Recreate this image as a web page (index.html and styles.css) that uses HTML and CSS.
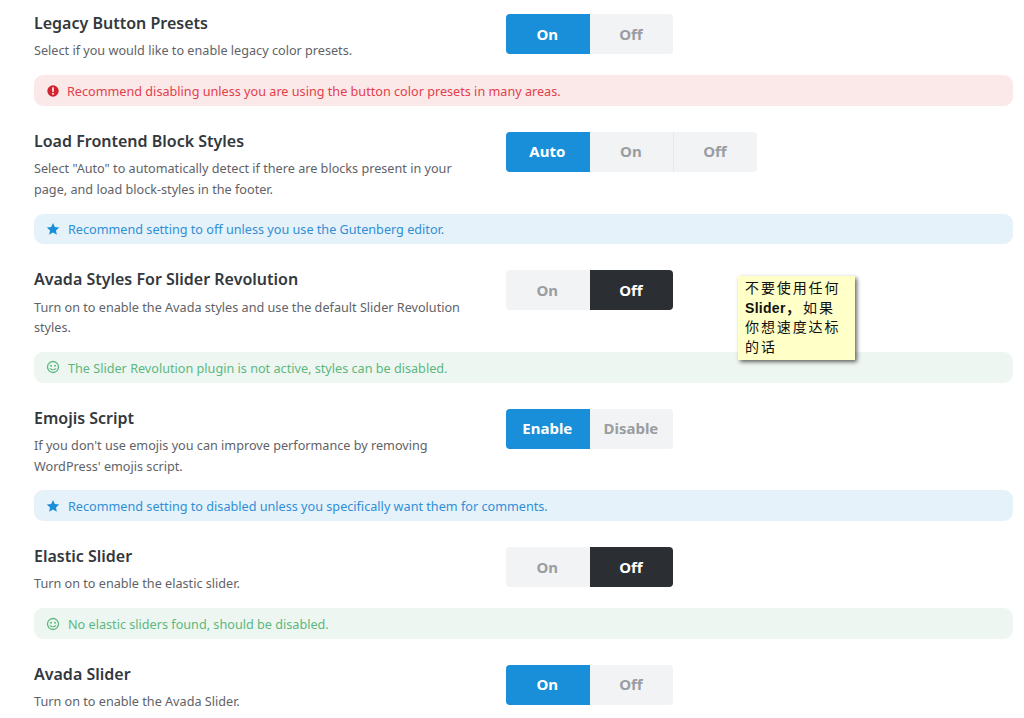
FILE: index.html
```html
<!DOCTYPE html>
<html lang="en">
<head>
<meta charset="utf-8">
<title>Performance options</title>
<link rel="stylesheet" href="styles.css">
</head>
<body>
<main class="options">
  <section class="option">
    <div class="row">
      <div class="info"><h3>Legacy Button Presets</h3><p>Select if you would like to enable legacy color presets.</p></div>
      <div class="toggle"><span class="seg active">On</span><span class="seg">Off</span></div>
    </div>
    <div class="notice danger">
      <svg class="icon" viewBox="0 0 16 16"><circle cx="8" cy="8" r="6.5" fill="currentColor"/><rect x="7" y="3.8" width="2" height="5.2" rx=".6" fill="#fbe9e9"/><circle cx="8" cy="11.1" r="1.15" fill="#fbe9e9"/></svg>
      <span>Recommend disabling unless you are using the button color presets in many areas.</span>
    </div>
  </section>
  <section class="option">
    <div class="row">
      <div class="info"><h3>Load Frontend Block Styles</h3><p>Select "Auto" to automatically detect if there are blocks present in your page, and load block-styles in the footer.</p></div>
      <div class="toggle"><span class="seg active">Auto</span><span class="seg">On</span><span class="seg">Off</span></div>
    </div>
    <div class="notice info-note">
      <svg class="icon" viewBox="0 0 16 16"><path fill="currentColor" d="M8 1l2.1 4.6 5 .6-3.7 3.4 1 4.9L8 12.1l-4.4 2.4 1-4.9L.9 6.200l5-.6z"/></svg>
      <span>Recommend setting to off unless you use the Gutenberg editor.</span>
    </div>
  </section>
  <section class="option">
    <div class="row">
      <div class="info"><h3>Avada Styles For Slider Revolution</h3><p>Turn on to enable the Avada styles and use the default Slider Revolution styles.</p></div>
      <div class="toggle"><span class="seg">On</span><span class="seg dark">Off</span></div>
    </div>
    <div class="notice success">
      <svg class="icon" viewBox="0 0 16 16"><circle cx="8" cy="8" r="6.300" fill="none" stroke="currentColor" stroke-width="1.500"/><circle cx="5.700" cy="6.500" r="1.100" fill="currentColor"/><circle cx="10.300" cy="6.500" r="1.100" fill="currentColor"/><path d="M4.800 9.700c1.600 2 4.800 2 6.400 0" fill="none" stroke="currentColor" stroke-width="1.300" stroke-linecap="round"/></svg>
      <span>The Slider Revolution plugin is not active, styles can be disabled.</span>
    </div>
  </section>
  <section class="option">
    <div class="row">
      <div class="info"><h3>Emojis Script</h3><p>If you don't use emojis you can improve performance by removing WordPress' emojis script.</p></div>
      <div class="toggle"><span class="seg active">Enable</span><span class="seg">Disable</span></div>
    </div>
    <div class="notice info-note">
      <svg class="icon" viewBox="0 0 16 16"><path fill="currentColor" d="M8 1l2.1 4.6 5 .6-3.7 3.4 1 4.9L8 12.1l-4.4 2.4 1-4.9L.9 6.200l5-.6z"/></svg>
      <span>Recommend setting to disabled unless you specifically want them for comments.</span>
    </div>
  </section>
  <section class="option">
    <div class="row">
      <div class="info"><h3>Elastic Slider</h3><p>Turn on to enable the elastic slider.</p></div>
      <div class="toggle"><span class="seg">On</span><span class="seg dark">Off</span></div>
    </div>
    <div class="notice success">
      <svg class="icon" viewBox="0 0 16 16"><circle cx="8" cy="8" r="6.300" fill="none" stroke="currentColor" stroke-width="1.500"/><circle cx="5.700" cy="6.500" r="1.100" fill="currentColor"/><circle cx="10.300" cy="6.500" r="1.100" fill="currentColor"/><path d="M4.800 9.700c1.600 2 4.800 2 6.400 0" fill="none" stroke="currentColor" stroke-width="1.300" stroke-linecap="round"/></svg>
      <span>No elastic sliders found, should be disabled.</span>
    </div>
  </section>
  <section class="option">
    <div class="row">
      <div class="info"><h3>Avada Slider</h3><p>Turn on to enable the Avada Slider.</p></div>
      <div class="toggle"><span class="seg active">On</span><span class="seg">Off</span></div>
    </div>
  </section>
</main>
<aside class="sticky">不要使用任何<br><b>Slider，</b>如果<br>你想速度达标<br>的话</aside>
</body>
</html>
```
FILE: styles.css
```css
* { box-sizing: border-box; }
html, body { height: 718px; overflow: hidden; }
body {
  margin: 0;
  background: #fff;
  color: #5f6368;
  font-family: "Noto Sans", "Liberation Sans", sans-serif;
  font-size: 12.650px;
  line-height: 20.500px;
}
.options {
  display: flex;
  flex-direction: column;
  gap: 26.100px;
  padding: 14px 11px 0 34px;
}
.row {
  display: flex;
  gap: 42px;
  align-items: flex-start;
}
.info { width: 430px; }
.info h3 {
  margin: 0 0 8.200px;
  color: #33383d;
  font-size: 16px;
  font-weight: 600;
  line-height: 18px;
}
.info p { margin: 0; padding-top: .3px; }
.toggle {
  display: flex;
  height: 40px;
  border-radius: 4px;
  overflow: hidden;
  background: #f2f3f5;
}
.seg {
  display: flex;
  align-items: center;
  justify-content: center;
  width: 83.600px;
  padding: 0 1px .5px 0;
  color: #9a9da1;
  font-size: 15px;
  font-weight: 700;
}
.seg + .seg { border-left: 1px solid #e6e7ea; }
.seg.active { background: #198fd9; color: #fff; border-left: 0; }
.seg.active + .seg { border-left: 0; }
.seg.dark { background: #2b2e33; color: #fff; border-left: 0; }
.notice {
  display: flex;
  align-items: center;
  gap: 8px;
  height: 30.500px;
  margin-top: 14.300px;
  padding-left: 12px;
  border-radius: 9px;
}
.notice span { padding-top: 1px; }
.icon { width: 14px; height: 14px; flex: none; }
.danger { background: #fbe9e9; color: #e2404a; gap: 7px; }
.danger .icon { color: #d3232f; }
.info-note { background: #e6f2fa; color: #2f8fd6; }
.info-note .icon { color: #198fd9; }
.success { background: #eef6f2; color: #5cb87f; }
.sticky {
  position: absolute;
  left: 738px;
  top: 276px;
  width: 117px;
  height: 84px;
  padding: 3px 0 0 7px;
  background: #ffffc8;
  box-shadow: 2px 2px 4px rgba(0, 0, 0, .6);
  color: #111;
  font-family: "Liberation Sans", "Noto Sans CJK SC", sans-serif;
  font-size: 14px;
  line-height: 19.500px;
  letter-spacing: 1.900px;
}
.sticky b { font-weight: 700; letter-spacing: .3px; margin-right: 3px; }
```
